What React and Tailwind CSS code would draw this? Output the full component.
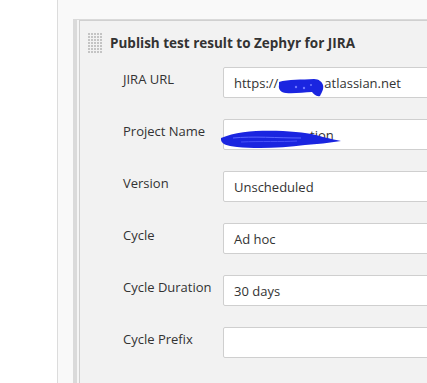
import React from "react";

const fields = [
  { label: "JIRA URL", value: "https://", tail: "atlassian.net", scribble: "url" },
  { label: "Project Name", value: "", tail: "tion", scribble: "project" },
  { label: "Version", value: "Unscheduled" },
  { label: "Cycle", value: "Ad hoc" },
  { label: "Cycle Duration", value: "30 days" },
  { label: "Cycle Prefix", value: "" },
];

const Grip = () => {
  const dots = [];
  for (let r = 0; r < 7; r++) {
    for (let c = 0; c < 5; c++) {
      dots.push(<rect key={`${r}-${c}`} x={c * 3} y={r * 3} width="2" height="2" fill="#c4c4c4" />);
    }
  }
  return (
    <svg width="15" height="21" viewBox="0 0 15 21" className="shrink-0">
      {dots}
    </svg>
  );
};

// redaction marks drawn over the hidden parts
const UrlScribble = () => (
  <svg width="46" height="18" viewBox="0 0 46 18" className="absolute left-[54px] top-[11px] h-[18px] w-[46px]">
    <path
      d="M1 3 C10 0 24 1 36 0 C41 0 44 3 45 6 C46 10 44 13 42 17 C38 18 36 15 34 13 C26 13 16 15 8 14 C3 14 0 10 1 6 Z"
      fill="#1a25e0"
    />
    <g fill="#7079ff">
      <circle cx="18" cy="8" r="1.2" />
      <circle cx="26" cy="9" r="1.2" />
      <circle cx="33" cy="6" r="1" />
    </g>
  </svg>
);

const ProjectScribble = () => (
  <svg width="126" height="20" viewBox="0 0 126 20" className="absolute left-[-7px] top-[9px] h-[20px] w-[126px]">
    <path
      d="M4 9 C20 2 44 1 66 2 C84 3 98 5 106 8 C114 10 120 11 124 12 C112 14 100 15 88 16 C66 19 40 20 20 18 C10 17 3 15 4 9 Z"
      fill="#1a25e0"
    />
    <path d="M16 9 C36 7 60 9 84 9" stroke="#5a66ff" strokeWidth="1" fill="none" />
    <path d="M24 13 C44 12 64 13 80 12" stroke="#4650f8" strokeWidth="1" fill="none" />
  </svg>
);

export default function App() {
  return (
    <div
      className="flex h-[383px] w-[427px] overflow-hidden bg-white text-[#333]"
      style={{ fontFamily: '"Open Sans", "Noto Sans", Arial, sans-serif' }}
    >
      <div className="w-[57px] shrink-0 bg-white" />
      <div className="flex flex-1 border-l border-[#dcdcdc] bg-[#f9f9f9] pl-[15px] pt-[19px]">
        <div className="flex flex-1 border-l-[4px] border-t border-[#dadada] bg-[#f5f5f5]">
          <div className="ml-[2px] flex-1 border-l border-t border-[#d0d0d0] bg-[#f2f2f2] pl-[8px] pt-[12px]">
            <div className="flex items-center gap-[7px]">
              <Grip />
              <span className="text-[13.5px] font-bold text-[#333]">
                Publish test result to Zephyr for JIRA
              </span>
            </div>
            <div className="mt-[13px] flex flex-col gap-[21px] pl-[35px]">
              {fields.map((f) => (
                <div key={f.label} className="flex h-[31px]">
                  <div className="w-[100px] shrink-0 pt-[3px] text-[13px] text-[#333]">{f.label}</div>
                  <div className="relative flex h-[31px] w-[240px] shrink-0 items-center rounded-[2px] border border-[#cfcfcf] bg-white pl-[10px] pt-[3px] text-[13px] text-[#333]">
                    {f.scribble === "url" && (
                      <>
                        <span>{f.value}</span>
                        <span className="w-[46px] shrink-0" />
                        <span>{f.tail}</span>
                        <UrlScribble />
                      </>
                    )}
                    {f.scribble === "project" && (
                      <>
                        <span className="w-[76px] shrink-0" />
                        <span>{f.tail}</span>
                        <ProjectScribble />
                      </>
                    )}
                    {!f.scribble && <span>{f.value}</span>}
                  </div>
                </div>
              ))}
            </div>
          </div>
        </div>
      </div>
    </div>
  );
}
